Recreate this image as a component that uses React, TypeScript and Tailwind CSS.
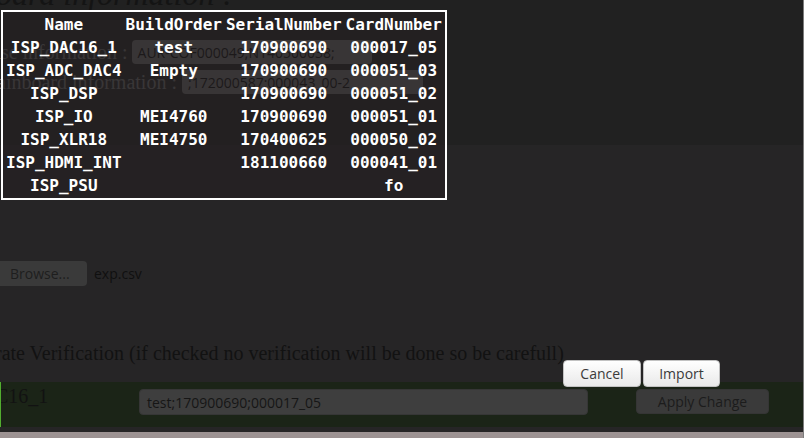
const rows: [string, string, string, string][] = [
  ["ISP_DAC16_1", "test", "170900690", "000017_05"],
  ["ISP_ADC_DAC4", "Empty", "170900690", "000051_03"],
  ["ISP_DSP", "", "170900690", "000051_02"],
  ["ISP_IO", "MEI4760", "170900690", "000051_01"],
  ["ISP_XLR18", "MEI4750", "170400625", "000050_02"],
  ["ISP_HDMI_INT", "", "181100660", "000041_01"],
  ["ISP_PSU", "", "", "fo"],
];

const headers = ["Name", "BuildOrder", "SerialNumber", "CardNumber"];

function BoardTable() {
  return (
    <table className="absolute left-[1px] top-[10px] border-2 border-separate border-spacing-[2px] border-white bg-[rgba(37,33,34,0.76)] text-center font-['DejaVu_Sans_Mono',monospace] text-[16px] font-bold leading-[19px] text-white">
      <thead>
        <tr>
          {headers.map((h) => (
            <th key={h} className="p-px font-bold">
              {h}
            </th>
          ))}
        </tr>
      </thead>
      <tbody>
        {rows.map((r) => (
          <tr key={r[0]}>
            {r.map((cell, i) => (
              <td key={i} className="p-px">
                {cell}
              </td>
            ))}
          </tr>
        ))}
      </tbody>
    </table>
  );
}

export default function App() {
  return (
    <div className="relative flex h-[438px] w-[804px] overflow-hidden bg-[#212121]">
      <div className="flex min-w-0 flex-1 flex-col">
        {/* board information block */}
        <div className="h-[145px] shrink-0 overflow-hidden bg-[#212121] font-['Liberation_Serif',serif]">
          <div className="-mt-[22px] -ml-[4px] whitespace-nowrap text-[32px] italic leading-[32px] text-[#141414]">
            oard information :
          </div>
          <div className="mt-[30px] flex h-[24px] items-center gap-[4px]">
            <span className="-ml-[8px] whitespace-nowrap text-[20px] leading-[24px] text-[#7a7a7a]">
              ase information :
            </span>
            <div className="flex h-[24px] w-[240px] items-center rounded-[4px] bg-[#767676] pl-[6px] font-['Open_Sans',sans-serif] text-[14px] text-black">
              AUR-COF000049;N140500038;
            </div>
          </div>
          <div className="mt-[6px] flex h-[24px] items-center gap-[5px]">
            <span className="-ml-[3px] whitespace-nowrap text-[20px] leading-[24px] text-[#7a7a7a]">
              ainboard information :
            </span>
            <div className="flex h-[24px] w-[241px] items-center rounded-[4px] bg-[#767676] pl-[6px] font-['Open_Sans',sans-serif] text-[14px] text-black">
              ;172000587;000043_00-2
            </div>
          </div>
        </div>

        {/* import section */}
        <div className="h-[237px] shrink-0 bg-[#262526]">
          <div className="mt-[116px] flex items-center font-['Open_Sans',sans-serif] text-[14px]">
            <div className="flex h-[25px] w-[87px] items-center rounded-r-[4px] bg-[#3a3a3a] pl-[10px] text-[#1e1e1e]">
              Browse...
            </div>
            <span className="ml-[7px] text-[#101010]">exp.csv</span>
          </div>
          <div className="-ml-[5px] mt-[55px] whitespace-nowrap font-['Liberation_Serif',serif] text-[20px] leading-[24px] text-[#121212]">
            rate Verification (if checked no verification will be done so be carefull)
          </div>
        </div>

        {/* selected card row */}
        <div className="flex h-[45px] shrink-0 items-start border-l border-[#52ad2f] bg-[#1b2417] pt-[7px]">
          <div className="-mt-[5px] w-[138px] shrink-0 overflow-hidden whitespace-nowrap font-['Liberation_Serif',serif] text-[20px] leading-[24px] text-[#121212]">
            <span className="-ml-[6px] inline-block">C16_1</span>
          </div>
          <div className="flex h-[26px] w-[449px] shrink-0 items-center rounded-[4px] border border-[#363636] bg-[#3e3e3e] pl-[7px] font-['Open_Sans',sans-serif] text-[14px] text-[#161616]">
            test;170900690;000017_05
          </div>
          <div className="ml-[48px] flex h-[25px] w-[133px] shrink-0 items-center justify-center rounded-[4px] border border-[#353535] bg-[#3a3a3a] font-['Open_Sans',sans-serif] text-[14px] text-[#1c1c1c]">
            Apply Change
          </div>
        </div>
        <div className="h-[5px] shrink-0 bg-[#262526]" />
        <div className="h-[6px] shrink-0 bg-[#9d9393]" />
      </div>
      <div className="w-px shrink-0 bg-[#7d7d7d]" />

      <BoardTable />

      {/* dialog buttons */}
      <div className="absolute left-[563px] top-[360px] flex gap-[2px] font-['Open_Sans',sans-serif] text-[14px] text-[#3b3b3b]">
        <button className="flex h-[27px] w-[78px] items-center justify-center rounded-[4px] border border-[#c2c2c2] bg-gradient-to-b from-white to-[#e9e9e9]">
          Cancel
        </button>
        <button className="flex h-[27px] w-[77px] items-center justify-center rounded-[4px] border border-[#c2c2c2] bg-gradient-to-b from-white to-[#e9e9e9]">
          Import
        </button>
      </div>
    </div>
  );
}
